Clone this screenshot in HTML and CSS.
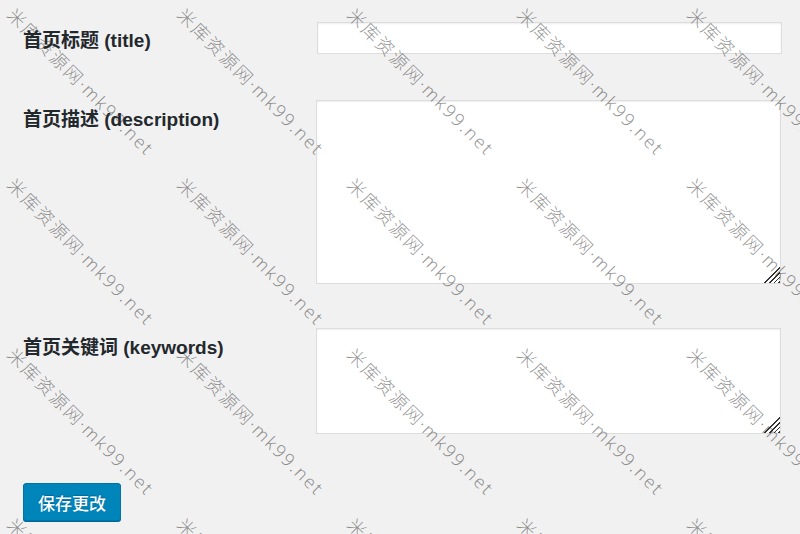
FILE: index.html
```html
<!DOCTYPE html>
<html lang="zh-CN">
<head>
<meta charset="utf-8">
<title>首页设置</title>
<link rel="stylesheet" href="styles.css">
</head>
<body>
<form class="settings">
  <div class="row row-title">
    <label class="label" for="title">首页标题 (title)</label>
    <input class="field input" id="title" type="text">
  </div>
  <div class="row">
    <label class="label" for="desc">首页描述 (description)</label>
    <div class="area-wrap">
      <textarea class="field area area-desc" id="desc"></textarea>
    </div>
  </div>
  <div class="row">
    <label class="label" for="kw">首页关键词 (keywords)</label>
    <div class="area-wrap">
      <textarea class="field area area-kw" id="kw"></textarea>
    </div>
  </div>
  <div class="actions">
    <button class="btn" type="button">保存更改</button>
  </div>
</form>
<div class="watermark" aria-hidden="true">
  <span class="wm"><span class="wm-text">米库资源网·mk99.net</span></span>
  <span class="wm"><span class="wm-text">米库资源网·mk99.net</span></span>
  <span class="wm"><span class="wm-text">米库资源网·mk99.net</span></span>
  <span class="wm"><span class="wm-text">米库资源网·mk99.net</span></span>
  <span class="wm"><span class="wm-text">米库资源网·mk99.net</span></span>
  <span class="wm"><span class="wm-text">米库资源网·mk99.net</span></span>
  <span class="wm"><span class="wm-text">米库资源网·mk99.net</span></span>
  <span class="wm"><span class="wm-text">米库资源网·mk99.net</span></span>
  <span class="wm"><span class="wm-text">米库资源网·mk99.net</span></span>
  <span class="wm"><span class="wm-text">米库资源网·mk99.net</span></span>
  <span class="wm"><span class="wm-text">米库资源网·mk99.net</span></span>
  <span class="wm"><span class="wm-text">米库资源网·mk99.net</span></span>
  <span class="wm"><span class="wm-text">米库资源网·mk99.net</span></span>
  <span class="wm"><span class="wm-text">米库资源网·mk99.net</span></span>
  <span class="wm"><span class="wm-text">米库资源网·mk99.net</span></span>
  <span class="wm"><span class="wm-text">米库资源网·mk99.net</span></span>
  <span class="wm"><span class="wm-text">米库资源网·mk99.net</span></span>
  <span class="wm"><span class="wm-text">米库资源网·mk99.net</span></span>
  <span class="wm"><span class="wm-text">米库资源网·mk99.net</span></span>
  <span class="wm"><span class="wm-text">米库资源网·mk99.net</span></span>
</div>
</body>
</html>
```

FILE: styles.css
```css
html, body {
  margin: 0;
  padding: 0;
  height: 100%;
  overflow: hidden;
}

body {
  position: relative;
  background: #f1f1f1;
  color: #23282d;
  font-family: "Liberation Sans", "Noto Sans CJK SC", sans-serif;
}

.settings {
  padding: 22px 0 0 23px;
}

.row {
  display: grid;
  grid-template-columns: 293px 465px;
  align-items: start;
  margin-bottom: 44px;
}

.row-title {
  margin-bottom: 46px;
}

.label {
  font-size: 19px;
  font-weight: bold;
  line-height: 24px;
  padding-top: 8px;
}

.row-title .label {
  padding-top: 7px;
}

.field {
  display: block;
  box-sizing: border-box;
  margin: 0;
  background: #fff;
  border: 1px solid #ddd;
  box-shadow: inset 0 1px 2px rgba(0, 0, 0, 0.07);
  font: 14px "Liberation Sans", "Noto Sans CJK SC", sans-serif;
  color: #32373c;
  outline: none;
}

.input {
  width: 465px;
  height: 32px;
  margin-left: 1px;
  padding: 3px 5px;
}

.area-wrap {
  position: relative;
  width: 465px;
}

.area {
  width: 465px;
  resize: none;
  padding: 4px 6px;
}

.area-desc {
  height: 184px;
}

.area-kw {
  height: 106px;
}

.area-wrap::after {
  content: "";
  position: absolute;
  right: 1px;
  bottom: 1px;
  width: 17px;
  height: 17px;
  background: repeating-linear-gradient(135deg,
    transparent 0, transparent 2.2px,
    #333 2.2px, #333 3.4px);
  -webkit-mask: linear-gradient(135deg, transparent 52%, #000 52%);
  mask: linear-gradient(135deg, transparent 52%, #000 52%);
}

.actions {
  padding-top: 5px;
}

.btn {
  box-sizing: border-box;
  width: 98px;
  height: 38px;
  padding: 0 14px;
  background: #0085ba;
  border: 1px solid #0073aa;
  border-radius: 3px;
  box-shadow: 0 1px 0 #006799;
  color: #fff;
  font: 500 17px "Noto Sans CJK SC", sans-serif;
  text-shadow: 0 -1px 1px #006799;
  cursor: pointer;
}

.watermark {
  position: absolute;
  inset: 0;
  overflow: hidden;
  pointer-events: none;
  display: grid;
  grid-template-columns: repeat(5, 170px);
  grid-auto-rows: 170px;
  padding: 5px 0 0 17px;
  box-sizing: border-box;
}

.wm {
  position: relative;
}

.wm-text {
  display: block;
  white-space: nowrap;
  font: 300 18px/18px "Noto Sans", "Noto Sans CJK SC", sans-serif;
  letter-spacing: 2px;
  color: rgba(40, 40, 40, 0.5);
  transform: rotate(45deg);
  transform-origin: 0 0;
}
```
